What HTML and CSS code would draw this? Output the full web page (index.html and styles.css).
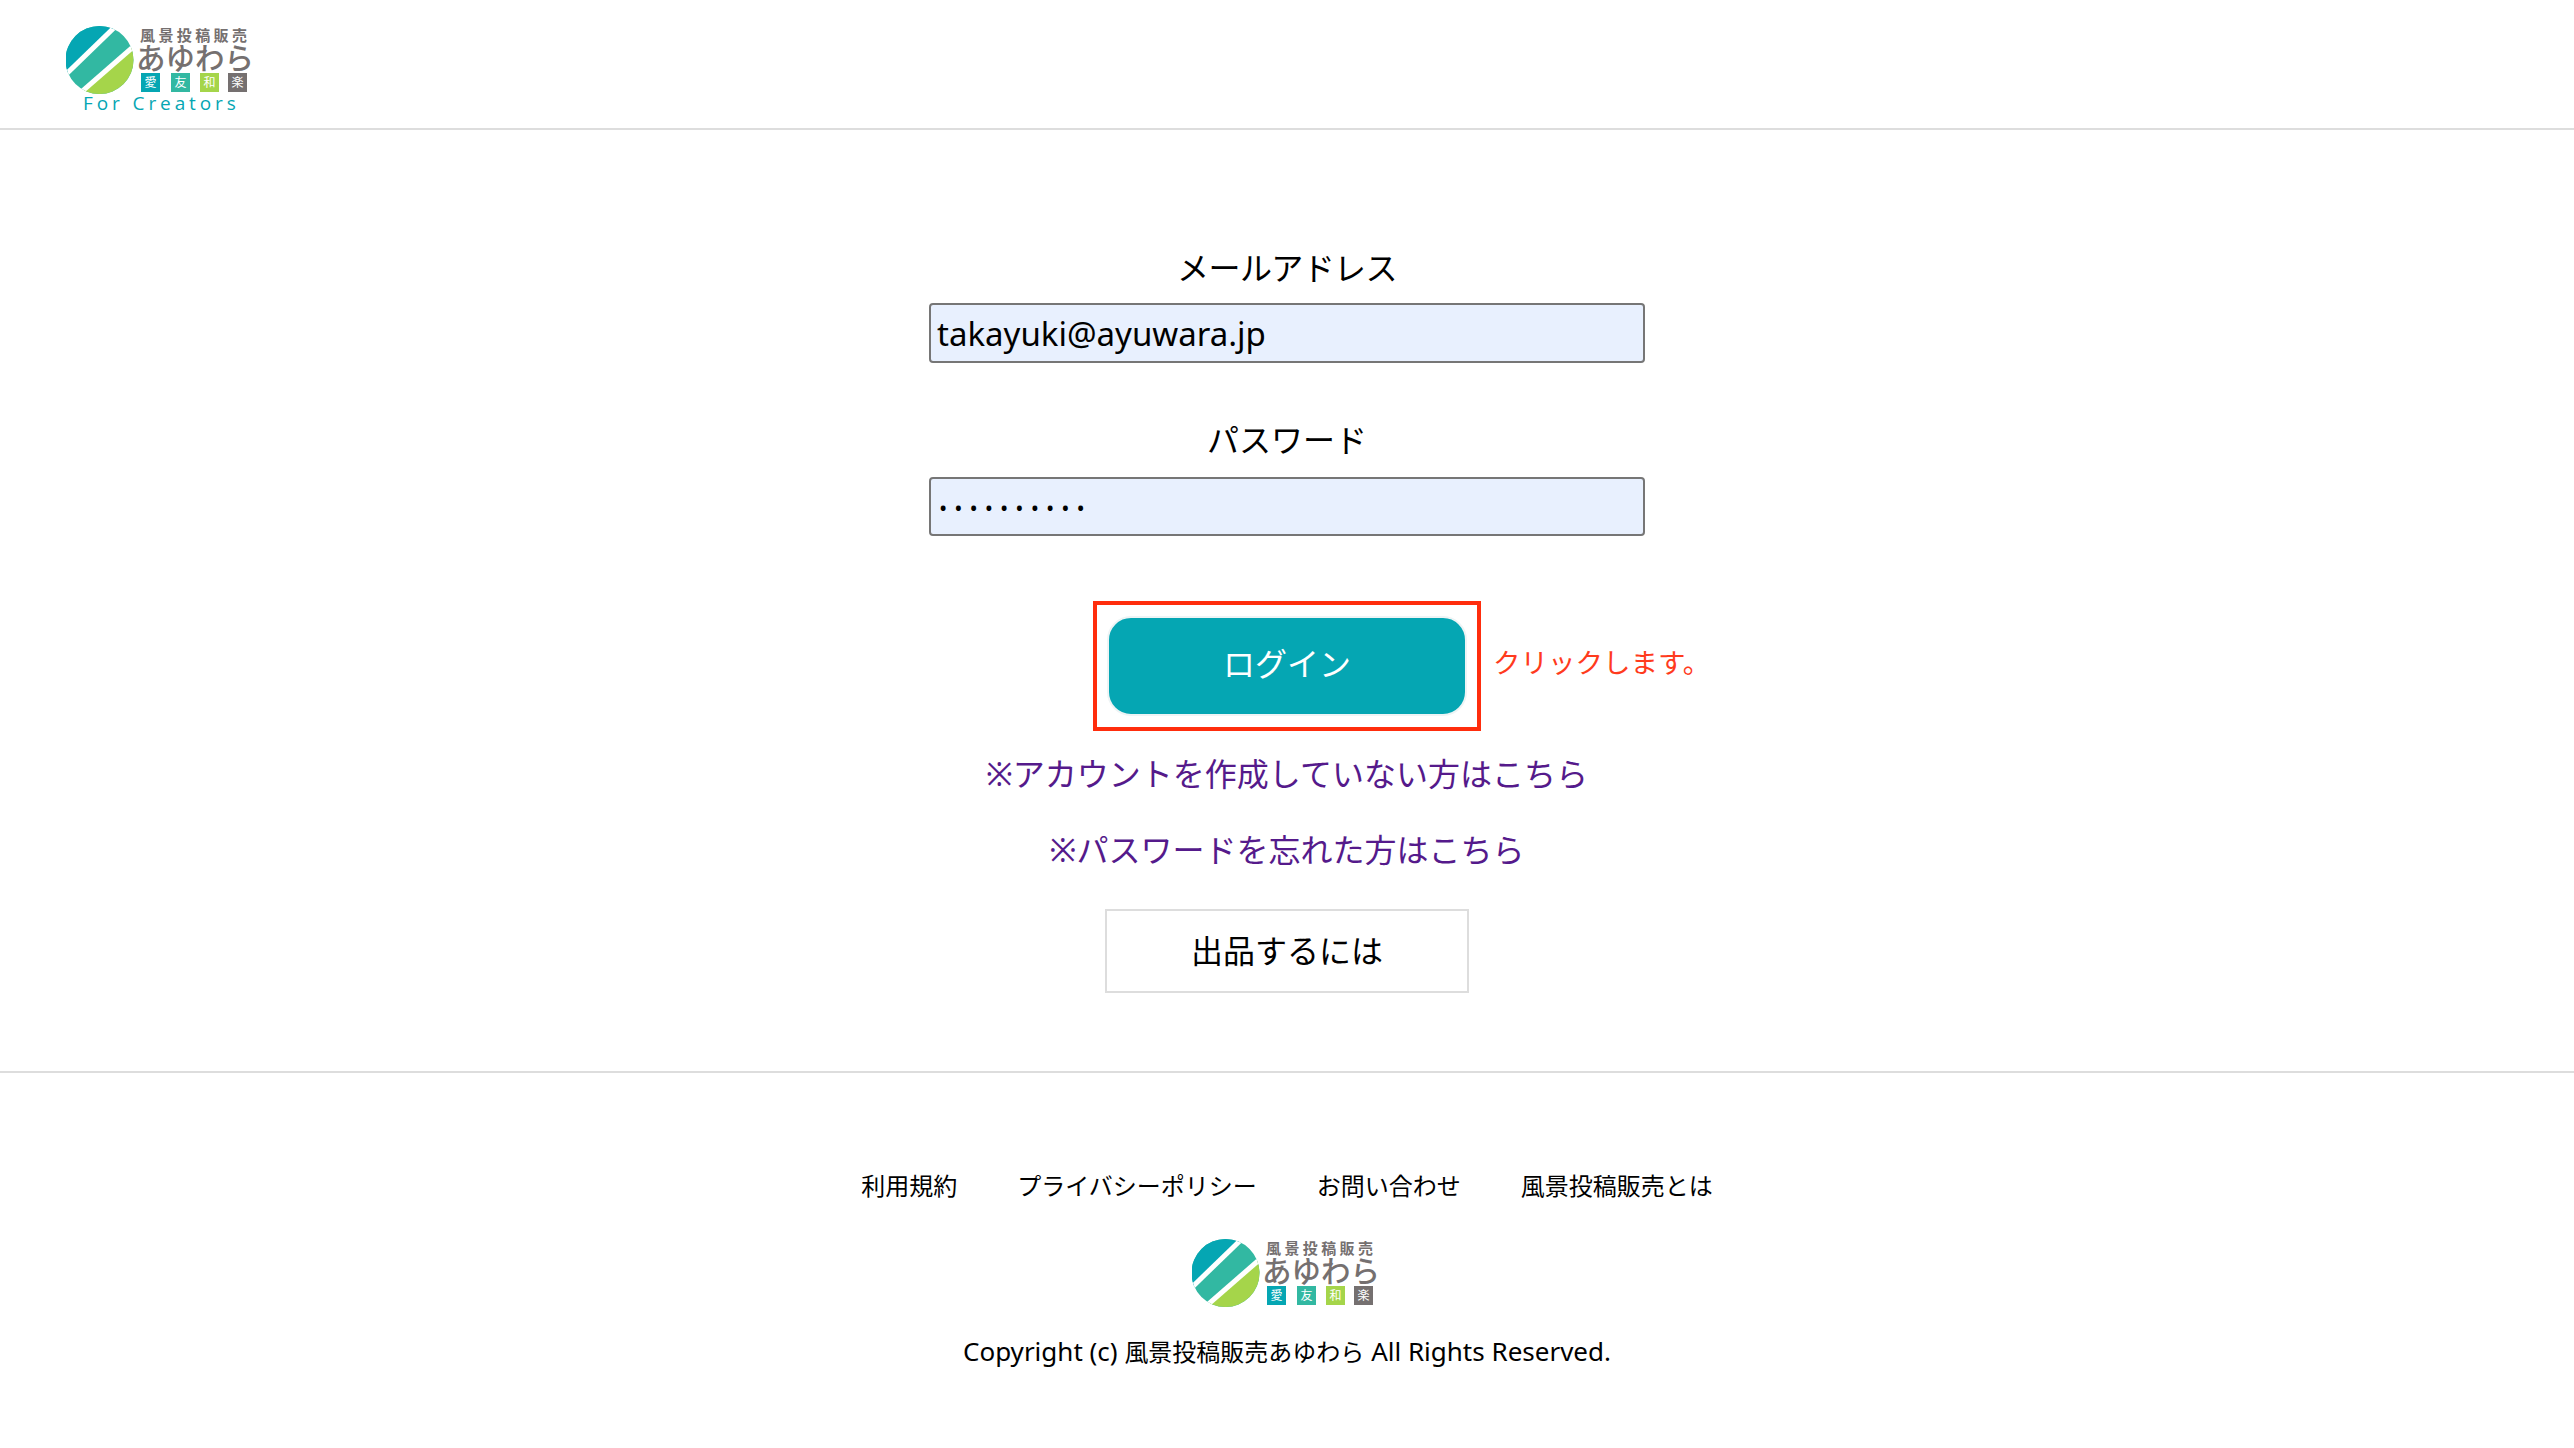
FILE: index.html
```html
<!DOCTYPE html>
<html lang="ja">
<head>
  <meta charset="UTF-8" />
  <meta name="viewport" content="width=device-width, initial-scale=1.0"/>
  <title>ログイン</title>
  <link rel="stylesheet" href="styles.css">
</head>
<body>

  <header>
    <svg class="logo" width="190" height="90" viewBox="0 0 190 90">
      <defs>
        <clipPath id="logoCircle"><circle cx="33.5" cy="34" r="34" /></clipPath>
      </defs>
      <g clip-path="url(#logoCircle)">
        <rect x="-2" y="-2" width="72" height="72" fill="#32b8a2" />
        <polygon points="-5,53 55,-5 -5,-5" fill="#05a6b3" />
        <polygon points="5,75 75,14 75,75" fill="#a5d54a" />
        <line x1="-5" y1="53" x2="55" y2="-5" stroke="#fff" stroke-width="5" />
        <line x1="5" y1="75" x2="75" y2="14" stroke="#fff" stroke-width="5" />
      </g>
      <text class="logo-top" x="74" y="15">風景投稿販売</text>
      <text class="logo-name" x="70" y="43">あゆわら</text>
      <rect x="75" y="47" width="19" height="19" fill="#05a6b3" />
      <rect x="105" y="47" width="19" height="19" fill="#32b8a2" />
      <rect x="134" y="47" width="19" height="19" fill="#a5d54a" />
      <rect x="162" y="47" width="19" height="19" fill="#757070" />
      <text class="logo-tile" x="84.5" y="61">愛</text>
      <text class="logo-tile" x="114.5" y="61">友</text>
      <text class="logo-tile" x="143.5" y="61">和</text>
      <text class="logo-tile" x="171.5" y="61">楽</text>
      <text class="logo-sub" x="17" y="84">For Creators</text>
    </svg>
  </header>

  <main>
    <form class="login-form">
      <label for="email">メールアドレス</label>
      <input type="text" id="email" value="takayuki@ayuwara.jp" />

      <label for="password">パスワード</label>
      <input type="password" id="password" value="abcdefghij" />

      <div class="login-mark">
        <button type="button" class="login-btn">ログイン</button>
        <span class="mark-note">クリックします。</span>
      </div>
    </form>

    <a class="text-link" href="#">※アカウントを作成していない方はこちら</a>
    <a class="text-link" href="#">※パスワードを忘れた方はこちら</a>
    <a class="seller-btn" href="#">出品するには</a>
  </main>

  <footer>
    <nav class="footer-nav">
      <a href="#">利用規約</a>
      <a href="#">プライバシーポリシー</a>
      <a href="#">お問い合わせ</a>
      <a href="#">風景投稿販売とは</a>
    </nav>
    <svg class="footer-logo" width="190" height="68" viewBox="0 0 190 68">
      <g clip-path="url(#logoCircle)">
        <rect x="-2" y="-2" width="72" height="72" fill="#32b8a2" />
        <polygon points="-5,53 55,-5 -5,-5" fill="#05a6b3" />
        <polygon points="5,75 75,14 75,75" fill="#a5d54a" />
        <line x1="-5" y1="53" x2="55" y2="-5" stroke="#fff" stroke-width="5" />
        <line x1="5" y1="75" x2="75" y2="14" stroke="#fff" stroke-width="5" />
      </g>
      <text class="logo-top" x="74" y="15">風景投稿販売</text>
      <text class="logo-name" x="70" y="43">あゆわら</text>
      <rect x="75" y="47" width="19" height="19" fill="#05a6b3" />
      <rect x="105" y="47" width="19" height="19" fill="#32b8a2" />
      <rect x="134" y="47" width="19" height="19" fill="#a5d54a" />
      <rect x="162" y="47" width="19" height="19" fill="#757070" />
      <text class="logo-tile" x="84.5" y="61">愛</text>
      <text class="logo-tile" x="114.5" y="61">友</text>
      <text class="logo-tile" x="143.5" y="61">和</text>
      <text class="logo-tile" x="171.5" y="61">楽</text>
    </svg>
    <p class="copyright">Copyright (c) <span class="site-name">風景投稿販売あゆわら</span> All Rights Reserved.</p>
  </footer>

</body>
</html>
```

FILE: styles.css
```css
body {
  margin: 0;
  font-family: "Noto Sans", "Noto Sans CJK JP", sans-serif;
  background-color: #fff;
  color: #000;
}

a {
  text-decoration: none;
}

header {
  height: 130px;
  padding: 26px 0 0 66px;
  box-sizing: border-box;
  border-bottom: 2px solid #ddd;
}

.logo,
.footer-logo {
  display: block;
}

.logo-top {
  font-size: 15px;
  font-weight: 700;
  letter-spacing: 3.4px;
  fill: #757070;
}

.logo-name {
  font-size: 29.5px;
  font-weight: 500;
  fill: #757070;
}

.logo-tile {
  font-size: 12px;
  fill: #fff;
  text-anchor: middle;
}

.logo-sub {
  font-family: "Open Sans", sans-serif;
  font-size: 19px;
  letter-spacing: 3.9px;
  fill: #05a6b3;
}

main {
  display: flex;
  flex-direction: column;
  align-items: center;
  padding: 114px 0 78px;
  border-bottom: 2px solid #ddd;
}

.login-form {
  display: flex;
  flex-direction: column;
  align-items: center;
}

label {
  font-size: 32px;
  line-height: 48px;
  margin-bottom: 13px;
}

label:first-child {
  margin-bottom: 11px;
  letter-spacing: -0.6px;
}

input {
  width: 716px;
  height: 60px;
  box-sizing: border-box;
  margin-bottom: 53px;
  padding: 0 6px;
  border: 2px solid #767676;
  border-radius: 4px;
  background-color: #e8f0fe;
  font-family: "Noto Sans", sans-serif;
  font-size: 33px;
  color: #000;
}

#password {
  height: 59px;
  margin-bottom: 0;
  padding: 0 8px;
  font-size: 22px;
  letter-spacing: 7px;
}

.login-mark {
  position: relative;
  margin-top: 65px;
  padding: 11px 10px;
  border: 4px solid #ff2d0d;
}

.login-btn {
  display: block;
  width: 360px;
  height: 100px;
  padding: 0 0 9px;
  border: 2px solid #eef4f5;
  border-radius: 24px;
  background-color: #05a6b3;
  color: #fff;
  font-family: inherit;
  font-size: 32px;
}

.mark-note {
  position: absolute;
  left: 396px;
  top: 36px;
  white-space: nowrap;
  font-size: 27.5px;
  color: #ff3b1d;
}

.text-link {
  margin-top: 14px;
  font-size: 32px;
  line-height: 58px;
  color: #551a8b;
}

.text-link + .text-link {
  margin-top: 18px;
}

.seller-btn {
  width: 364px;
  height: 84px;
  box-sizing: border-box;
  margin-top: 30px;
  border: 2px solid #ddd;
  font-size: 32px;
  line-height: 80px;
  text-align: center;
  color: #000;
}

footer {
  display: flex;
  flex-direction: column;
  align-items: center;
  padding-top: 93px;
}

.footer-nav {
  display: flex;
  gap: 60px;
}

.footer-nav a {
  font-size: 24px;
  line-height: 40px;
  color: #000;
}

.footer-logo {
  margin-top: 33px;
}

.copyright {
  margin: 20px 0 0;
  font-size: 26px;
  line-height: 48px;
}

.site-name {
  font-size: 24px;
}
```
